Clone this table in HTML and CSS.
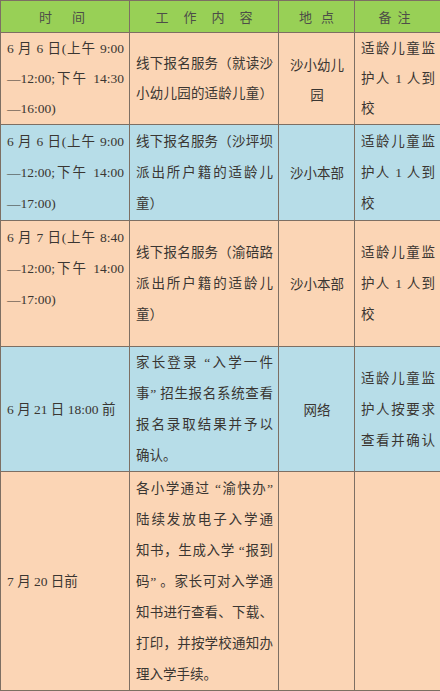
FILE: index.html
```html
<!DOCTYPE html>
<html lang="zh-CN">
<head>
<meta charset="utf-8">
<title>报名安排</title>
<link rel="stylesheet" href="styles.css">
</head>
<body>
<table class="plan">
  <colgroup>
    <col class="c-time">
    <col class="c-work">
    <col class="c-place">
    <col class="c-note">
  </colgroup>
  <thead>
    <tr class="head">
      <th><span class="ht ht-time">时间</span></th>
      <th><span class="ht ht-work">工作内容</span></th>
      <th><span class="ht ht-place">地点</span></th>
      <th><span class="ht ht-note">备注</span></th>
    </tr>
  </thead>
  <tbody>
    <tr class="peach r1">
      <td class="time">
        <span class="ln jf">6 月 6 日(上午 9:00</span>
        <span class="ln jf">—12:00;下午 14:30</span>
        <span class="ln">—16:00)</span>
      </td>
      <td class="work">
        <span class="ln jf">线下报名服务（就读沙</span>
        <span class="ln jf">小幼儿园的适龄儿童）</span>
      </td>
      <td class="place">沙小幼儿<br>园</td>
      <td class="note">
        <span class="ln jf">适龄儿童监</span>
        <span class="ln jf">护人 1 人到</span>
        <span class="ln">校</span>
      </td>
    </tr>
    <tr class="blue r2">
      <td class="time">
        <span class="ln jf">6 月 6 日(上午 9:00</span>
        <span class="ln jf">—12:00;下午 14:00</span>
        <span class="ln">—17:00)</span>
      </td>
      <td class="work">
        <span class="ln jf">线下报名服务（沙坪坝</span>
        <span class="ln jf">派出所户籍的适龄儿</span>
        <span class="ln">童）</span>
      </td>
      <td class="place">沙小本部</td>
      <td class="note">
        <span class="ln jf">适龄儿童监</span>
        <span class="ln jf">护人 1 人到</span>
        <span class="ln">校</span>
      </td>
    </tr>
    <tr class="peach r3">
      <td class="time top">
        <span class="ln jf">6 月 7 日(上午 8:40</span>
        <span class="ln jf">—12:00;下午 14:00</span>
        <span class="ln">—17:00)</span>
      </td>
      <td class="work">
        <span class="ln jf">线下报名服务（渝碚路</span>
        <span class="ln jf">派出所户籍的适龄儿</span>
        <span class="ln">童）</span>
      </td>
      <td class="place">沙小本部</td>
      <td class="note">
        <span class="ln jf">适龄儿童监</span>
        <span class="ln jf">护人 1 人到</span>
        <span class="ln">校</span>
      </td>
    </tr>
    <tr class="blue r4">
      <td class="time">6 月 21 日 18:00 前</td>
      <td class="work">
        <span class="ln jf">家长登录 “入学一件</span>
        <span class="ln jf">事” 招生报名系统查看</span>
        <span class="ln jf">报名录取结果并予以</span>
        <span class="ln">确认。</span>
      </td>
      <td class="place">网络</td>
      <td class="note">
        <span class="ln jf">适龄儿童监</span>
        <span class="ln jf">护人按要求</span>
        <span class="ln jf">查看并确认</span>
      </td>
    </tr>
    <tr class="peach r5">
      <td class="time">7 月 20 日前</td>
      <td class="work">
        <span class="ln jf">各小学通过 “渝快办”</span>
        <span class="ln jf">陆续发放电子入学通</span>
        <span class="ln jf">知书，生成入学 “报到</span>
        <span class="ln jf">码” 。家长可对入学通</span>
        <span class="ln jf">知书进行查看、下载、</span>
        <span class="ln jf">打印，并按学校通知办</span>
        <span class="ln">理入学手续。</span>
      </td>
      <td class="place"></td>
      <td class="note"></td>
    </tr>
  </tbody>
</table>
</body>
</html>
```

FILE: styles.css
```css
html, body {
  margin: 0;
  padding: 0;
  background: #ffffff;
}

.plan {
  width: 440px;
  border-collapse: collapse;
  table-layout: fixed;
  font-family: "Liberation Serif", "Noto Sans CJK SC", serif;
  font-size: 13.5px;
  line-height: 31px;
  color: #3a3632;
}

.c-time { width: 129px; }
.c-work { width: 149px; }
.c-place { width: 76px; }
.c-note { width: 86px; }

.plan th,
.plan td {
  border: 1px solid #7d6f63;
  padding: 0 5px 0 6px;
  vertical-align: middle;
}

.head {
  height: 32px;
  background: #98d056;
}

.plan th {
  font-weight: normal;
  font-family: "Noto Sans CJK SC", sans-serif;
  font-size: 13px;
  color: #4d4d48;
  text-align: center;
  line-height: 30px;
  padding: 0;
}

.ht { display: inline-block; }
.ht-time { letter-spacing: 20px; padding-left: 14px; }
.ht-work { letter-spacing: 15px; padding-left: 15px; }
.ht-place { letter-spacing: 9px; padding-left: 9px; }
.ht-note { letter-spacing: 6px; padding-left: 0; }

.peach { background: #fbd5b5; }
.blue { background: #b7dde8; }

.r1 { height: 92px; }
.r1 td { line-height: 30px; }
.r2 { height: 96px; }
.r3 { height: 126px; }
.r4 { height: 124px; }
.r5 { height: 219px; }

.ln {
  display: block;
  white-space: nowrap;
}
.jf {
  text-align: justify;
  text-align-last: justify;
}

.time { text-align: left; white-space: nowrap; }
.time.top { vertical-align: top; padding-top: 1px; }

.work { text-align: left; padding: 0 4px 0 7px; }

.place {
  text-align: center;
  padding: 0 10px;
  font-family: "Noto Sans CJK SC", sans-serif;
}

.note { text-align: left; padding: 0 5px 0 5px; }
```
